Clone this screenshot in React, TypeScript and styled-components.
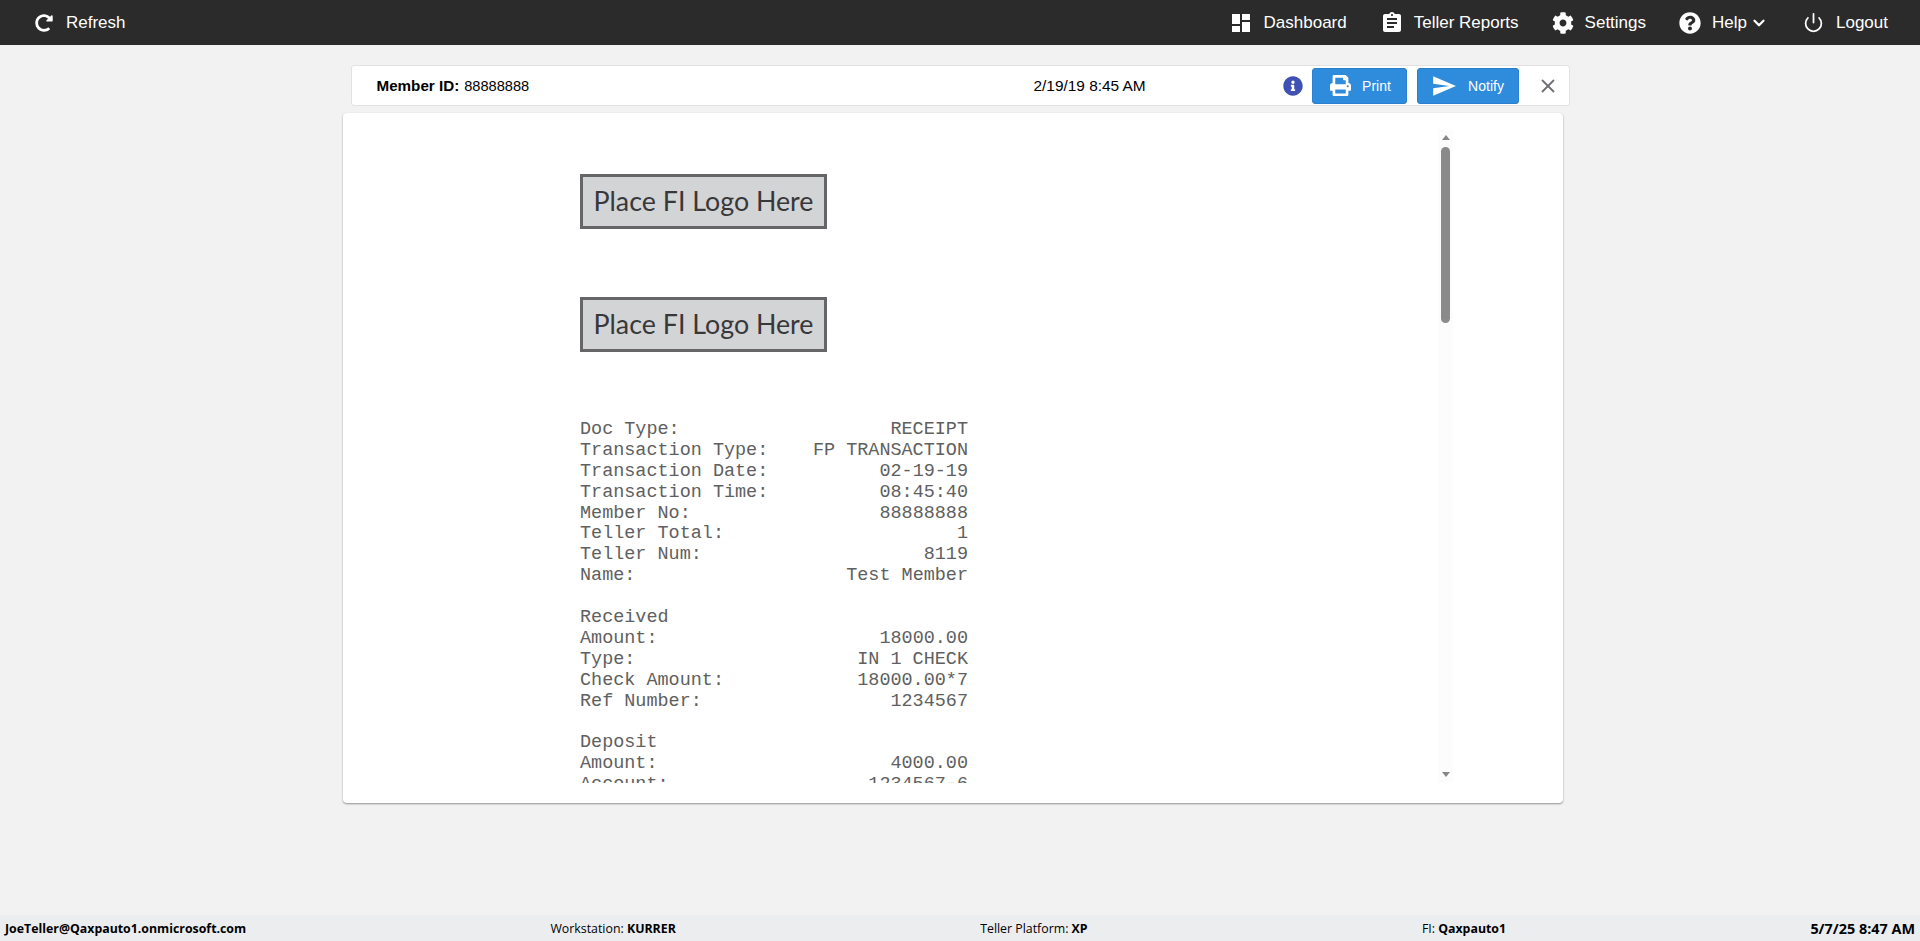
import styled, { createGlobalStyle } from 'styled-components';
import { FaCog, FaInfoCircle, FaPrint, FaQuestionCircle, FaRedoAlt } from 'react-icons/fa';
import { MdAssignment, MdDashboard, MdSend } from 'react-icons/md';
import { FiChevronDown, FiPower, FiX } from 'react-icons/fi';

const GlobalStyle = createGlobalStyle`
    html, body {
        margin: 0;
        padding: 0;
        background: #f2f2f2;
        font-family: "Liberation Sans", Arial, sans-serif;
    }
`

const Page = styled.div`
    height: 941px;
    display: flex;
    flex-direction: column;
    overflow: hidden;
`

const TopBar = styled.header`
    height: 45px;
    flex: none;
    background: #2b2b2b;
    color: #fff;
    display: flex;
    align-items: center;
    justify-content: space-between;
    padding: 0 32px 0 35px;
`

const NavGroup = styled.nav`
    display: flex;
    align-items: center;
    gap: 33px;
`

const NavItem = styled.a<{ $gap?: number }>`
    display: flex;
    align-items: center;
    gap: ${p => p.$gap ?? 11}px;
    font-size: 17px;
    color: #fff;
    svg { display: block; }
`

const HelpLabel = styled.span`
    display: flex;
    align-items: center;
    gap: 3px;
    margin-right: 2px;
`

const Main = styled.main`
    flex: 1;
    display: flex;
    flex-direction: column;
    align-items: center;
    padding-top: 20px;
`

const MemberBar = styled.div`
    width: 1219px;
    height: 41px;
    box-sizing: border-box;
    flex: none;
    background: #fff;
    border: 1px solid #e2e2e2;
    border-radius: 3px;
    display: grid;
    grid-template-columns: 657px 1fr auto;
    align-items: center;
    padding-left: 25px;
    font-size: 14.6px;
    color: #000;
`

const MemberId = styled.div`
    b { font-size: 15.2px; margin-right: 5px; }
`

const Stamp = styled.div`
    font-size: 15.4px;
`

const Actions = styled.div`
    display: flex;
    align-items: center;
`

const InfoIcon = styled(FaInfoCircle)`
    color: #3f51b5;
    margin-right: 9px;
`

const ActionButton = styled.button<{ $width: number; $inset?: number }>`
    width: ${p => p.$width}px;
    height: 36px;
    margin-right: 10px;
    padding: 0 0 0 ${p => p.$inset ?? 0}px;
    border: 1px solid #2a7fd0;
    border-radius: 3px;
    background: #2f8bdc;
    color: #fff;
    font: 14px "Liberation Sans", Arial, sans-serif;
    display: flex;
    align-items: center;
    justify-content: center;
    gap: 11px;
`

const CloseButton = styled.button`
    width: 43px;
    height: 36px;
    margin-left: -3px;
    padding: 0 0 0 2px;
    border: none;
    background: none;
    color: #6f7175;
    display: flex;
    align-items: center;
    justify-content: center;
`

const Card = styled.section`
    width: 1220px;
    height: 690px;
    box-sizing: border-box;
    flex: none;
    margin: 7px 14px 0 0;
    background: #fff;
    border-radius: 4px;
    box-shadow: 0 1px 2px rgba(0, 0, 0, 0.4);
    padding: 16px 110px 20px 110px;
`

const Viewer = styled.div`
    position: relative;
    height: 654px;
    overflow: hidden;
`

const ScrollTrack = styled.div`
    position: absolute;
    top: 0;
    right: 0;
    bottom: 0;
    width: 15px;
    background: #fcfcfc;
    display: flex;
    flex-direction: column;
    align-items: center;
    padding: 6px 0;
    box-sizing: border-box;
`

const ScrollThumb = styled.div`
    width: 9px;
    height: 176px;
    margin-top: 7px;
    border-radius: 4.5px;
    background: #8a8a8a;
`

const ScrollArrow = styled.div<{ $down?: boolean }>`
    width: 0;
    height: 0;
    border-left: 4.5px solid transparent;
    border-right: 4.5px solid transparent;
    ${p => p.$down
        ? 'border-top: 5px solid #888; margin-top: auto;'
        : 'border-bottom: 5px solid #888;'}
`

const Receipt = styled.div`
    width: 388px;
    margin-left: 127px;
    padding-top: 45px;
    box-sizing: border-box;
`

const LogoBox = styled.div`
    width: 247px;
    height: 55px;
    box-sizing: border-box;
    margin-bottom: 68px;
    padding-bottom: 2px;
    background: #d3d4d6;
    border: 3px solid #666668;
    color: #38383b;
    font-family: Lato, sans-serif;
    font-size: 26.8px;
    display: flex;
    align-items: center;
    justify-content: center;
    white-space: nowrap;
`

const Lines = styled.div`
    font-family: "Liberation Mono", "Courier New", monospace;
    font-size: 18.47px;
    line-height: 20.9px;
    color: #606060;
`

const Line = styled.div`
    height: 20.9px;
    display: flex;
    justify-content: space-between;
    white-space: pre;
`

const StatusBar = styled.footer`
    height: 26px;
    flex: none;
    background: #ecedef;
    color: #000;
    display: flex;
    align-items: center;
    justify-content: space-between;
    padding: 0 5px;
    font-family: "Open Sans", sans-serif;
    font-size: 12.35px;
`

const PlatformItem = styled.span`
    margin-right: 30px;
`

const Clock = styled.b`
    font-size: 14.4px;
`

const lines: [string, string][] = [
    ['Doc Type:', 'RECEIPT'],
    ['Transaction Type:', 'FP TRANSACTION'],
    ['Transaction Date:', '02-19-19'],
    ['Transaction Time:', '08:45:40'],
    ['Member No:', '88888888'],
    ['Teller Total:', '1'],
    ['Teller Num:', '8119'],
    ['Name:', 'Test Member'],
    ['', ''],
    ['Received', ''],
    ['Amount:', '18000.00'],
    ['Type:', 'IN 1 CHECK'],
    ['Check Amount:', '18000.00*7'],
    ['Ref Number:', '1234567'],
    ['', ''],
    ['Deposit', ''],
    ['Amount:', '4000.00'],
    ['Account:', '1234567-6'],
]

export default function App() {
    return (
        <Page>
            <GlobalStyle />
            <TopBar>
                <NavGroup>
                    <NavItem $gap={13}><FaRedoAlt size={18} />Refresh</NavItem>
                </NavGroup>
                <NavGroup>
                    <NavItem><MdDashboard size={24} />Dashboard</NavItem>
                    <NavItem $gap={10}><MdAssignment size={24} />Teller Reports</NavItem>
                    <NavItem><FaCog size={22} />Settings</NavItem>
                    <NavItem>
                        <FaQuestionCircle size={22} />
                        <HelpLabel>Help<FiChevronDown size={18} strokeWidth={3} /></HelpLabel>
                    </NavItem>
                    <NavItem $gap={12}><FiPower size={21} />Logout</NavItem>
                </NavGroup>
            </TopBar>
            <Main>
                <MemberBar>
                    <MemberId><b>Member ID:</b>88888888</MemberId>
                    <Stamp>2/19/19 8:45 AM</Stamp>
                    <Actions>
                        <InfoIcon size={20} />
                        <ActionButton $width={95} $inset={3}><FaPrint size={21} />Print</ActionButton>
                        <ActionButton $width={102}><MdSend size={26} />Notify</ActionButton>
                        <CloseButton><FiX size={22} /></CloseButton>
                    </Actions>
                </MemberBar>
                <Card>
                    <Viewer>
                        <Receipt>
                            <LogoBox>Place FI Logo Here</LogoBox>
                            <LogoBox>Place FI Logo Here</LogoBox>
                            <Lines>
                                {lines.map(([label, value], i) => (
                                    <Line key={i}><span>{label}</span><span>{value}</span></Line>
                                ))}
                            </Lines>
                        </Receipt>
                        <ScrollTrack>
                            <ScrollArrow />
                            <ScrollThumb />
                            <ScrollArrow $down />
                        </ScrollTrack>
                    </Viewer>
                </Card>
            </Main>
            <StatusBar>
                <b>JoeTeller@Qaxpauto1.onmicrosoft.com</b>
                <span>Workstation: <b>KURRER</b></span>
                <PlatformItem>Teller Platform: <b>XP</b></PlatformItem>
                <span>FI: <b>Qaxpauto1</b></span>
                <Clock>5/7/25 8:47 AM</Clock>
            </StatusBar>
        </Page>
    )
}
